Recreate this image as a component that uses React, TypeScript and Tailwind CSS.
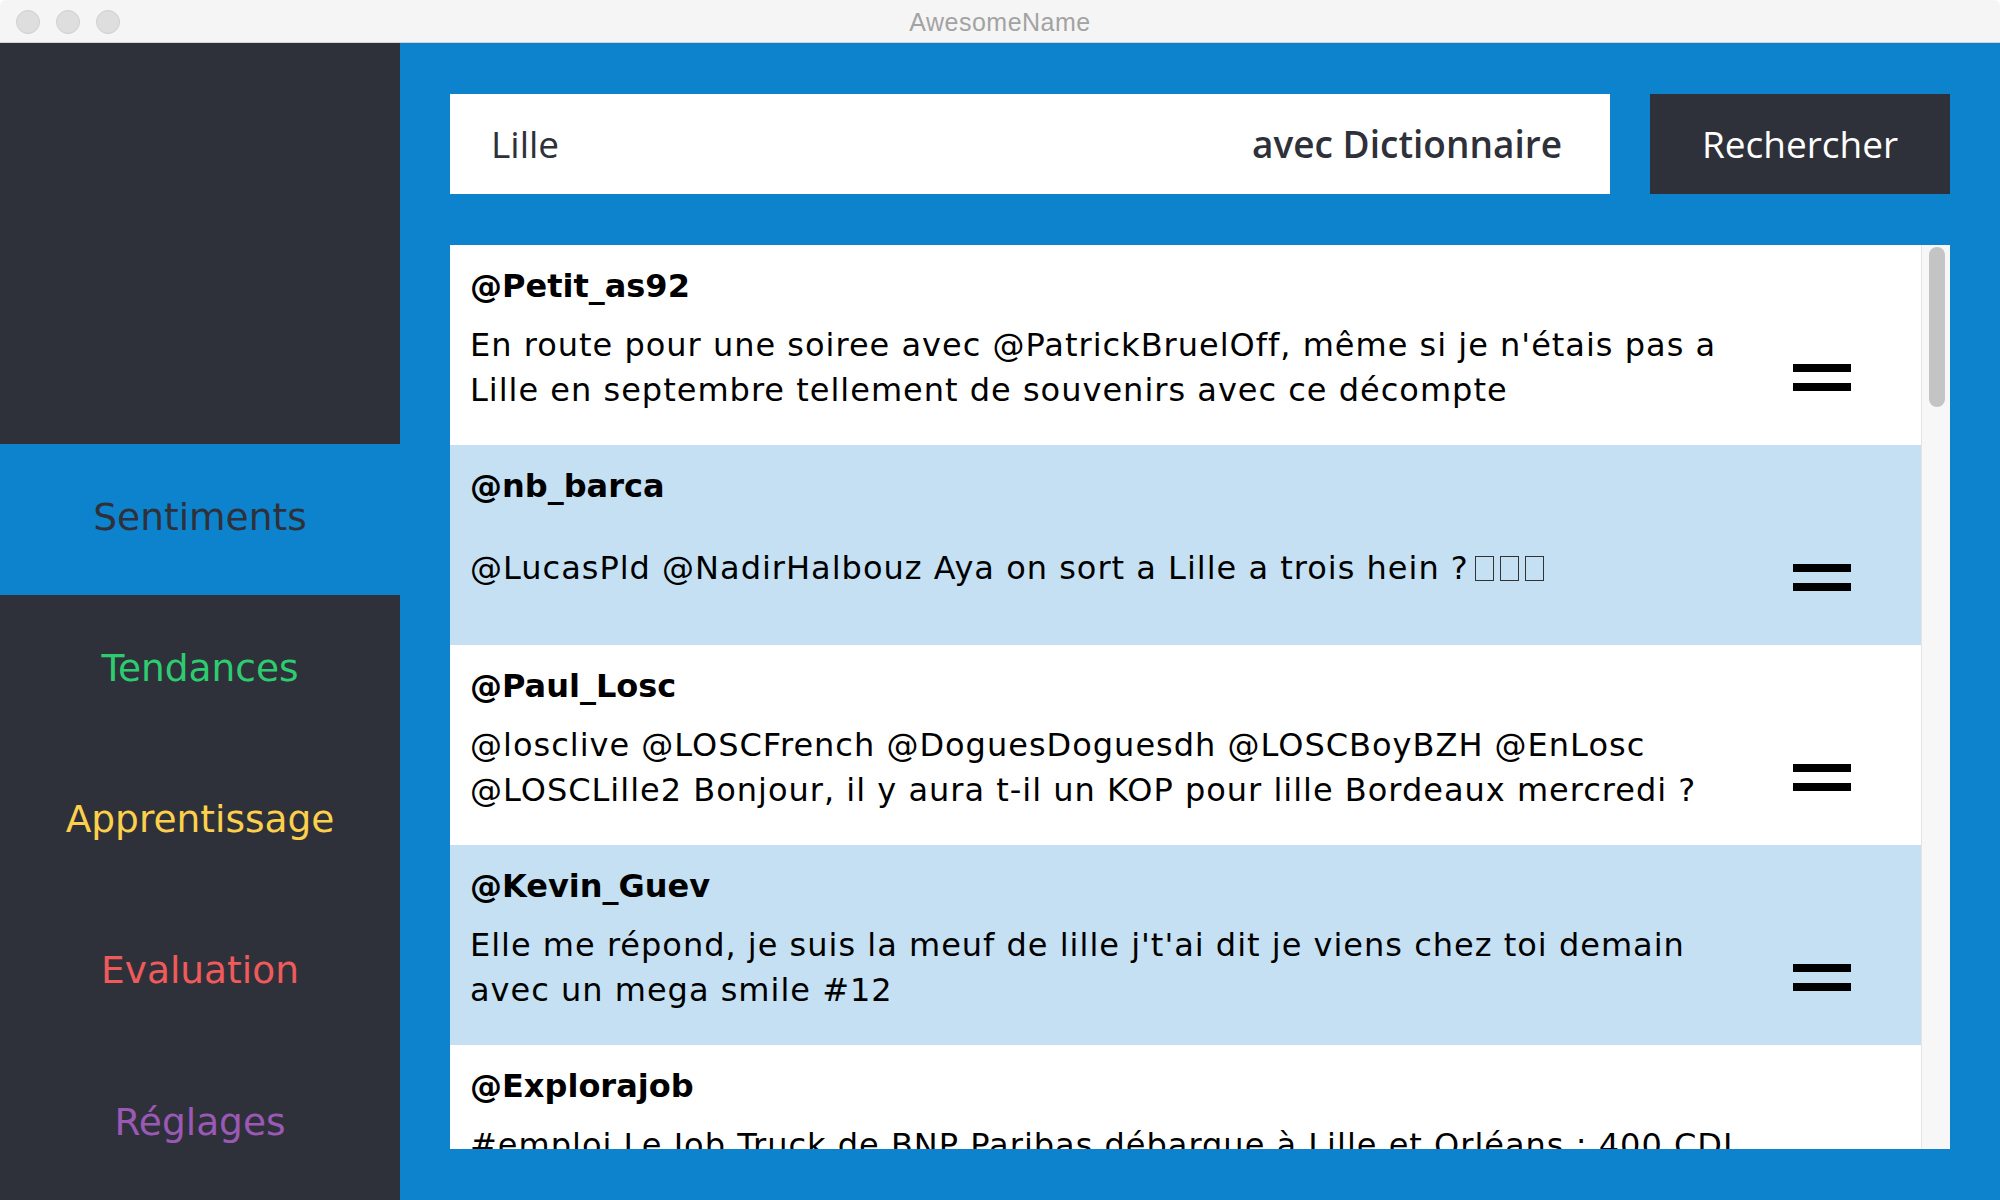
import React from "react";

type Tweet = {
  user: string;
  text: string;
  tofu?: number;
};

const tweets: Tweet[] = [
  {
    user: "@Petit_as92",
    text: "En route pour une soiree avec @PatrickBruelOff, même si je n'étais pas a Lille en septembre tellement de souvenirs avec ce décompte",
  },
  {
    user: "@nb_barca",
    text: "@LucasPld @NadirHalbouz Aya on sort a Lille a trois hein ?",
    tofu: 3,
  },
  {
    user: "@Paul_Losc",
    text: "@losclive @LOSCFrench @DoguesDoguesdh @LOSCBoyBZH @EnLosc @LOSCLille2 Bonjour, il y aura t-il un KOP pour lille Bordeaux mercredi ?",
  },
  {
    user: "@Kevin_Guev",
    text: "Elle me répond, je suis la meuf de lille j't'ai dit je viens chez toi demain avec un mega smile #12",
  },
  {
    user: "@Explorajob",
    text: "#emploi Le Job Truck de BNP Paribas débarque à Lille et Orléans : 400 CDI proposés",
  },
];

const menu = [
  { label: "Sentiments", color: "text-[#2f313a]", active: true },
  { label: "Tendances", color: "text-[#2ecc71]", active: false },
  { label: "Apprentissage", color: "text-[#fcd04b]", active: false },
  { label: "Evaluation", color: "text-[#ef5b5b]", active: false },
  { label: "Réglages", color: "text-[#9b59b6]", active: false },
];

// the "neutral" marker on every tweet
const EqualMark = () => (
  <div className="w-[58px] shrink-0 ml-[27px] mr-[70px] flex flex-col gap-[11px]">
    <div className="h-[8px] bg-black" />
    <div className="h-[8px] bg-black" />
  </div>
);

const TweetRow: React.FC<{ tweet: Tweet; odd: boolean }> = ({ tweet, odd }) => (
  <div
    className={
      odd
        ? "h-[200px] shrink-0 flex flex-col pl-[20px] bg-[#c4e0f2] font-['DejaVu_Sans',sans-serif] text-black"
        : "h-[200px] shrink-0 flex flex-col pl-[20px] bg-white font-['DejaVu_Sans',sans-serif] text-black"
    }
  >
    <div className="pt-[21px] h-[64px] leading-[40px] text-[32px] font-bold">{tweet.user}</div>
    <div className="flex-1 flex items-center">
      <p className="flex-1 mb-[18px] text-[32px] leading-[45px] tracking-[1px]">
        {tweet.text}
        {tweet.tofu &&
          Array.from({ length: tweet.tofu }).map((_, i) => (
            <span
              key={i}
              className="inline-block w-[19px] h-[25px] ml-[6px] border-[1.5px] border-[#333] align-[-2px]"
            />
          ))}
      </p>
      <EqualMark />
    </div>
  </div>
);

export default function App() {
  return (
    <div className="w-[2000px] h-[1200px] flex flex-col bg-white font-['Open_Sans',sans-serif] overflow-hidden">
      {/* Title bar */}
      <div className="h-[43px] shrink-0 relative flex items-center justify-center bg-[#f5f5f5] border-b border-[#d3d3d3] rounded-t-[6px]">
        <div className="absolute left-[16px] top-[10px] flex gap-[16px]">
          <span className="w-[24px] h-[24px] rounded-full bg-[#dedede] border border-[#d0d0d0]" />
          <span className="w-[24px] h-[24px] rounded-full bg-[#dedede] border border-[#d0d0d0]" />
          <span className="w-[24px] h-[24px] rounded-full bg-[#dedede] border border-[#d0d0d0]" />
        </div>
        <span className="pt-[4px] text-[25px] tracking-[0.5px] text-[#a3a3a3] font-['Liberation_Sans',sans-serif]">
          AwesomeName
        </span>
      </div>

      <div className="flex-1 flex min-h-0">
        {/* Sidebar */}
        <div className="w-[400px] shrink-0 flex flex-col bg-[#2f313a] font-['DejaVu_Sans',sans-serif]">
          <div className="h-[401px] shrink-0" />
          {menu.map((m) => (
            <div
              key={m.label}
              className={
                m.active
                  ? "flex-1 flex items-center justify-center bg-[#0e83cd]"
                  : "flex-1 flex items-center justify-center"
              }
            >
              <span className={`text-[37.5px] leading-none pb-[4px] ${m.color}`}>{m.label}</span>
            </div>
          ))}
        </div>

        {/* Main */}
        <div className="flex-1 flex flex-col bg-[#0e83cd] pt-[51px] pb-[51px] px-[50px] min-h-0">
          <div className="h-[100px] shrink-0 flex">
            <div className="flex-1 bg-white flex items-center justify-between pl-[41px] pr-[48px] text-[37px] text-[#2f313a]">
              <span>Lille</span>
              <span className="font-semibold">avec Dictionnaire</span>
            </div>
            <button className="w-[300px] ml-[40px] bg-[#2f313a] text-white text-[37px]">
              Rechercher
            </button>
          </div>

          <div className="mt-[51px] flex-1 flex bg-white overflow-hidden min-h-0">
            <div className="flex-1 flex flex-col overflow-hidden">
              {tweets.map((t, i) => (
                <TweetRow key={t.user} tweet={t} odd={i % 2 === 1} />
              ))}
            </div>
            <div className="w-[29px] shrink-0 bg-[#f7f7f7] border-l border-[#e4e4e4] pt-[2px] pl-[7px]">
              <div className="w-[16px] h-[160px] rounded-full bg-[#c4c4c4]" />
            </div>
          </div>
        </div>
      </div>
    </div>
  );
}
